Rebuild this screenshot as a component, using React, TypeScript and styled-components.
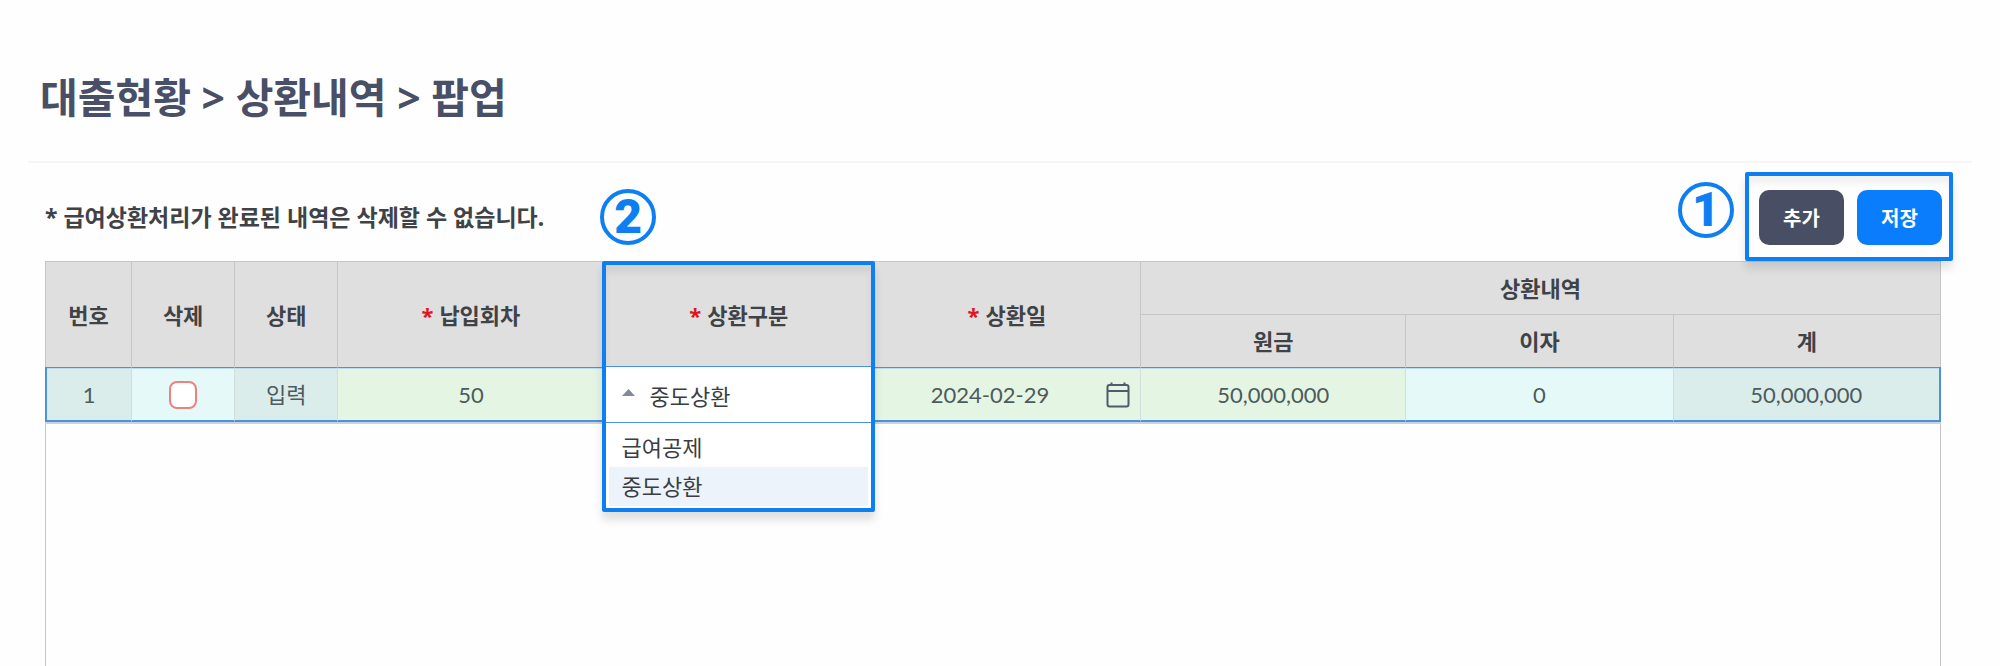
import React, { useState } from "react";
import styled, { createGlobalStyle } from "styled-components";

const blue = "#0d7ff2";
const gridLine = "#c6c6c8";
const rowLine = "#4b92da";

const GlobalStyle = createGlobalStyle`
  * { box-sizing: border-box; }
  body {
    margin: 0;
    background: #fefefe;
    color: #3f4246;
    font-family: Lato, "Noto Sans CJK KR", sans-serif;
    font-size: 22px;
  }
  button, input, select { font: inherit; color: inherit; }
`;

const Page = styled.main`
  display: flex;
  flex-direction: column;
  min-height: 100vh;
  padding: 0 28px;
`;

const Header = styled.header`
  padding: 67px 12px 33px;
  border-bottom: 2px solid #f6f6f7;
`;

const Title = styled.h1`
  margin: 0;
  color: #484f66;
  font-family: "Noto Sans", "Noto Sans CJK KR", sans-serif;
  font-size: 41px;
  font-weight: 700;
  line-height: 61px;
`;

const Content = styled.section`
  display: flex;
  flex-direction: column;
  flex: 1;
  padding: 9px 31px 0 17px;
`;

const Toolbar = styled.div`
  display: flex;
  align-items: center;
  justify-content: space-between;
  height: 89px;
`;

const Group = styled.div`
  display: flex;
  align-items: center;
  gap: 56px;
`;

const ActionGroup = styled.div`
  display: flex;
  align-items: flex-start;
  gap: 11px;
`;

const Note = styled.p`
  margin: 0;
  font-family: "Noto Sans", "Noto Sans CJK KR", sans-serif;
  font-size: 23px;
  font-weight: 700;
  line-height: 34px;
`;

const StepBadge = styled.span<{ $raised?: boolean }>`
  display: flex;
  align-items: center;
  justify-content: center;
  width: 56px;
  height: 56px;
  margin-top: ${({ $raised }) => ($raised ? 10 : 0)}px;
  border: 4px solid ${blue};
  border-radius: 50%;
  color: ${blue};
  font-family: Roboto, sans-serif;
  font-size: 48px;
  font-weight: 900;
  line-height: 48px;
`;

const Actions = styled.div`
  position: relative;
  z-index: 1;
  display: flex;
  gap: 13px;
  margin-right: -12px;
  padding: 14px 7px 12px 10px;
  border: 4px solid ${blue};
  border-radius: 2px;
  box-shadow: 0 8px 8px rgba(0, 0, 0, 0.1), inset 0 8px 6px rgba(0, 0, 0, 0.05);
`;

const ActionButton = styled.button<{ $primary?: boolean }>`
  width: 85px;
  height: 55px;
  padding: 0;
  border: 0;
  border-radius: 10px;
  background: ${({ $primary }) => ($primary ? "#097dfc" : "#484f65")};
  color: #fff;
  font-size: 20px;
  font-weight: 700;
`;

const Grid = styled.div`
  flex: 1;
  border: solid ${gridLine};
  border-width: 0 1px;
`;

const Table = styled.table`
  width: calc(100% + 2px);
  margin: 0 -1px;
  table-layout: fixed;
  border-collapse: separate;
  border-spacing: 0;
`;

const HeadCell = styled.th`
  position: relative;
  height: 53px;
  padding: 2px 0 0;
  border: solid ${gridLine};
  border-width: 1px 0 0 1px;
  background: #dfdfdf;
  font-weight: 700;
  line-height: 32px;
  &:last-child { border-right: 1px solid ${gridLine}; }
`;

const Required = styled.span`
  margin-right: 6px;
  color: #e0141c;
  font-family: "Noto Sans", sans-serif;
`;

type Tone = "locked" | "open" | "required";
const tones: Record<Tone, string> = {
  locked: "#dbedeb",
  open: "#e4f9f8",
  required: "#e5f5e3",
};

const Cell = styled.td<{ $tone: Tone }>`
  height: 55px;
  padding: 2px 0 0;
  border: solid ${rowLine};
  border-width: 1px 0 2px 1px;
  border-left-color: #d3dddc;
  background: ${({ $tone }) => tones[$tone]};
  color: #4d5b5c;
  line-height: 32px;
  text-align: center;
  box-shadow: 0 2px 0 #cdd3dd, inset 0 1px 0 #bddcf0;
  &:first-child { border-left: 2px solid ${rowLine}; }
  &:last-child { border-right: 2px solid ${rowLine}; }
`;

const Check = styled.input`
  appearance: none;
  display: block;
  width: 28px;
  height: 28px;
  margin: 0 auto;
  border: 2px solid #f08080;
  border-radius: 8px;
  background: #fff;
  &:checked { background: #f08080; }
`;

const DateField = styled.div`
  display: flex;
  align-items: center;
  padding-right: 10px;
`;

const DateInput = styled.input`
  flex: 1;
  min-width: 0;
  height: 32px;
  padding: 0;
  border: 0;
  background: none;
  text-align: center;
`;

const IconButton = styled.button`
  display: flex;
  padding: 0;
  border: 0;
  background: none;
`;

const Picker = styled.div`
  position: absolute;
  z-index: 2;
  top: -1px;
  left: -3px;
  right: -2px;
  border: 4px solid ${blue};
  border-radius: 2px;
  color: #3a3d42;
  font-weight: 400;
  box-shadow: 0 8px 8px rgba(0, 0, 0, 0.12), inset 0 8px 6px rgba(0, 0, 0, 0.06);
`;

const PickerSpace = styled.div`
  height: 101px;
`;

const SelectRow = styled.div`
  display: flex;
  align-items: center;
  gap: 15px;
  height: 57px;
  padding: 5px 16px 0;
  border: solid ${rowLine};
  border-width: 1px 0;
  background: #fff;
`;

const Select = styled.select`
  appearance: none;
  flex: 1;
  min-width: 0;
  height: 36px;
  padding: 0;
  border: 0;
  background: none;
`;

const Options = styled.ul`
  margin: 0;
  padding: 5px 3px 2px;
  background: #fff;
  list-style: none;
  text-align: left;
`;

const Option = styled.li<{ $selected: boolean }>`
  padding: 0 13px;
  background: ${({ $selected }) => ($selected ? "#ecf3fb" : "#fff")};
  line-height: 39px;
  cursor: pointer;
`;

const CalendarIcon = () => (
  <svg width="24" height="26" viewBox="0 0 24 26" fill="none" stroke="#4d5b6b" strokeWidth="2" aria-hidden="true">
    <rect x="1.500" y="3" width="21" height="21.500" rx="2" />
    <path d="M1.500 9H22.500M5.500 0.500V3M18.500 0.500V3" />
  </svg>
);

const Caret = () => (
  <svg width="13" height="20" viewBox="0 0 13 20" aria-hidden="true">
    <path d="M0 9 L6.500 2 L13 9Z" fill="#83889a" />
  </svg>
);

const columnWidths = [86, 103, 103, 266, 269, 267, 265, 267, 268];
const repaymentTypes = ["급여공제", "중도상환"];

export default function App() {
  const [type, setType] = useState("중도상환");
  const [date, setDate] = useState("2024-02-29");

  return (
    <Page>
      <GlobalStyle />
      <Header>
        <Title>대출현황 &gt; 상환내역 &gt; 팝업</Title>
      </Header>
      <Content>
        <Toolbar>
          <Group>
            <Note>* 급여상환처리가 완료된 내역은 삭제할 수 없습니다.</Note>
            <StepBadge>2</StepBadge>
          </Group>
          <ActionGroup>
            <StepBadge $raised>1</StepBadge>
            <Actions>
              <ActionButton type="button">추가</ActionButton>
              <ActionButton type="button" $primary>저장</ActionButton>
            </Actions>
          </ActionGroup>
        </Toolbar>
        <Grid>
          <Table>
            <colgroup>
              {columnWidths.map((width, i) => <col key={i} width={width} />)}
            </colgroup>
            <thead>
              <tr>
                <HeadCell rowSpan={2}>번호</HeadCell>
                <HeadCell rowSpan={2}>삭제</HeadCell>
                <HeadCell rowSpan={2}>상태</HeadCell>
                <HeadCell rowSpan={2}><Required>*</Required>납입회차</HeadCell>
                <HeadCell rowSpan={2}>
                  <Required>*</Required>상환구분
                  <Picker>
                    <PickerSpace />
                    <SelectRow>
                      <Caret />
                      <Select aria-label="상환구분" value={type} onChange={(e) => setType(e.target.value)}>
                        {repaymentTypes.map((t) => <option key={t}>{t}</option>)}
                      </Select>
                    </SelectRow>
                    <Options role="listbox" aria-label="상환구분">
                      {repaymentTypes.map((t) => (
                        <Option key={t} role="option" aria-selected={t === type} $selected={t === type} onClick={() => setType(t)}>
                          {t}
                        </Option>
                      ))}
                    </Options>
                  </Picker>
                </HeadCell>
                <HeadCell rowSpan={2}><Required>*</Required>상환일</HeadCell>
                <HeadCell colSpan={3}>상환내역</HeadCell>
              </tr>
              <tr>
                <HeadCell>원금</HeadCell>
                <HeadCell>이자</HeadCell>
                <HeadCell>계</HeadCell>
              </tr>
            </thead>
            <tbody>
              <tr>
                <Cell $tone="locked">1</Cell>
                <Cell $tone="open"><Check type="checkbox" aria-label="삭제" /></Cell>
                <Cell $tone="locked">입력</Cell>
                <Cell $tone="required">50</Cell>
                <Cell $tone="required" />
                <Cell $tone="required">
                  <DateField>
                    <DateInput aria-label="상환일" value={date} onChange={(e) => setDate(e.target.value)} />
                    <IconButton type="button" aria-label="날짜 선택"><CalendarIcon /></IconButton>
                  </DateField>
                </Cell>
                <Cell $tone="required">50,000,000</Cell>
                <Cell $tone="open">0</Cell>
                <Cell $tone="locked">50,000,000</Cell>
              </tr>
            </tbody>
          </Table>
        </Grid>
      </Content>
    </Page>
  );
}
